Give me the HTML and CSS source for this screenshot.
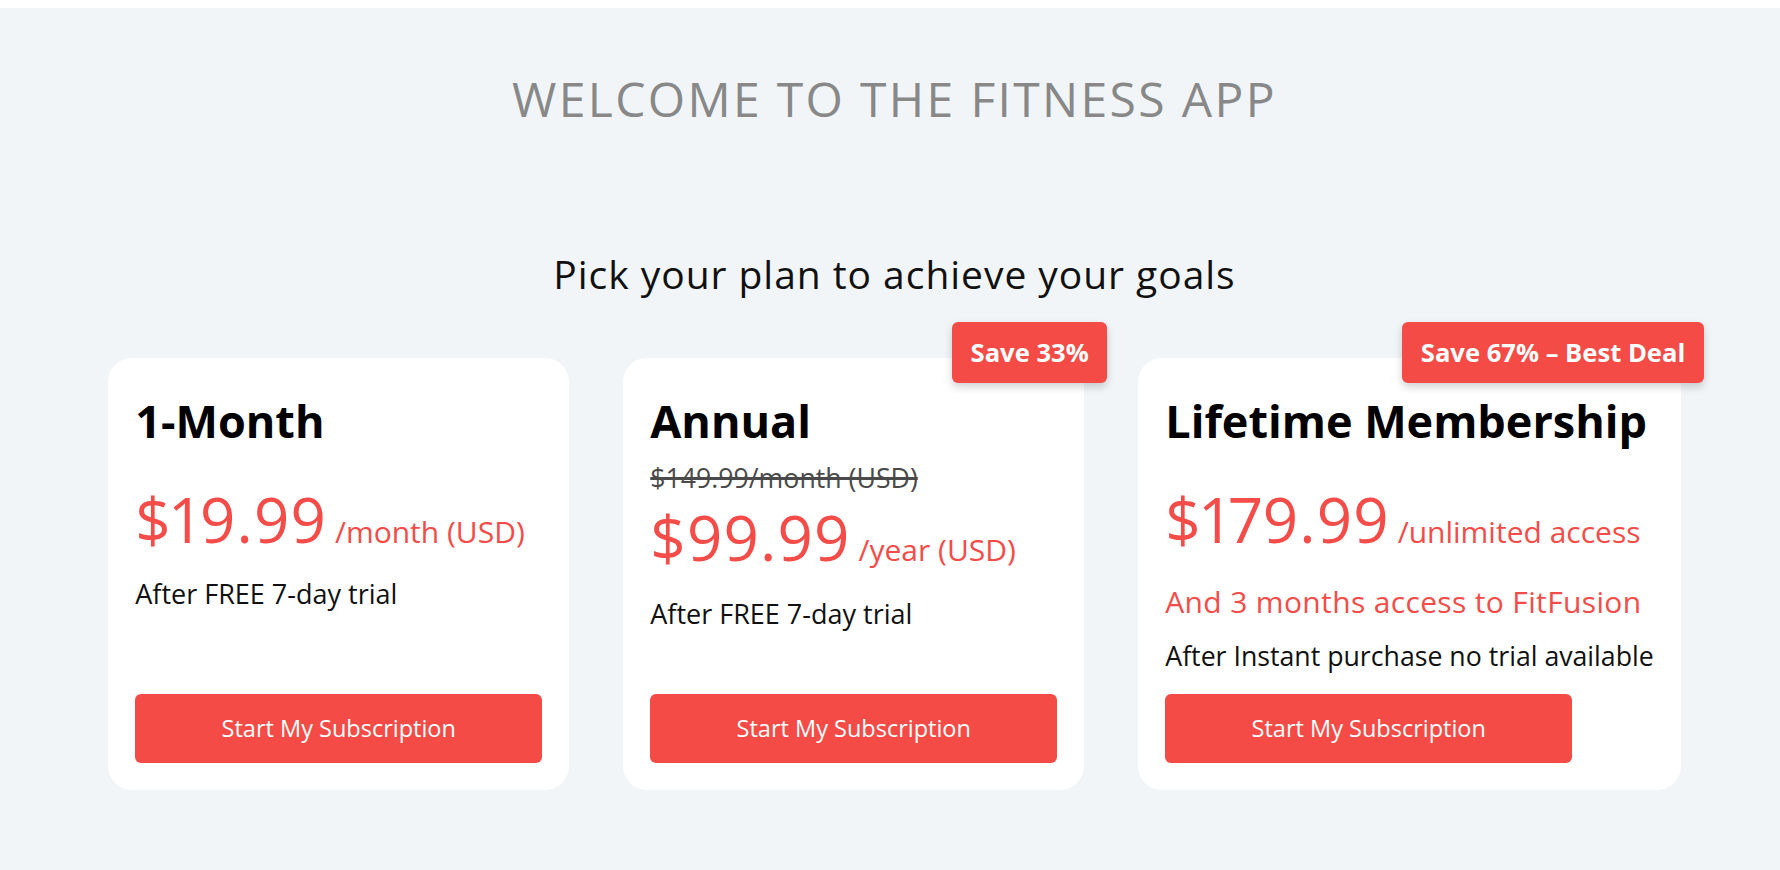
FILE: index.html
```html
<!DOCTYPE html>
<html lang="en">
<head>
<meta charset="utf-8">
<title>Fitness App – Plans</title>
<link rel="stylesheet" href="styles.css">
</head>
<body>
<main class="page">
  <h1 class="welcome">WELCOME TO THE FITNESS APP</h1>
  <h2 class="subtitle">Pick your plan to achieve your goals</h2>

  <section class="plans">
    <article class="card">
      <div class="card-body">
        <h3 class="plan-name">1-Month</h3>
        <p class="price">$19.99<span class="per"> /month (USD)</span></p>
        <p class="note">After FREE 7-day trial</p>
      </div>
      <button class="cta" type="button">Start My Subscription</button>
    </article>

    <article class="card">
      <span class="badge">Save 33%</span>
      <div class="card-body">
        <h3 class="plan-name">Annual</h3>
        <p class="old-price">$149.99/month (USD)</p>
        <p class="price price-after-old">$99.99<span class="per"> /year (USD)</span></p>
        <p class="note note-after-old">After FREE 7-day trial</p>
      </div>
      <button class="cta" type="button">Start My Subscription</button>
    </article>

    <article class="card">
      <span class="badge">Save 67% – Best Deal</span>
      <div class="card-body">
        <h3 class="plan-name">Lifetime Membership</h3>
        <p class="price">$179.99<span class="per"> /unlimited access</span></p>
        <p class="bonus">And 3 months access to FitFusion</p>
        <p class="note note-small">After Instant purchase no trial available</p>
      </div>
      <button class="cta" type="button">Start My Subscription</button>
    </article>
  </section>
</main>
</body>
</html>
```
FILE: styles.css
```css
html {
  background: #ffffff;
}

body {
  margin: 8px 0 0;
  font-family: "Open Sans", "Liberation Sans", sans-serif;
  color: #111111;
}

.page {
  min-height: calc(100vh - 8px);
  box-sizing: border-box;
  background: #f1f5f8;
  padding: 61.4px 0 0 9px;
  display: flex;
  flex-direction: column;
  align-items: center;
}

.welcome {
  margin: 0;
  font-size: 48px;
  line-height: 60px;
  font-weight: 400;
  letter-spacing: 2.35px;
  color: #888888;
  white-space: nowrap;
}

.subtitle {
  margin: 120.5px 0 0;
  font-size: 39px;
  line-height: 48px;
  font-weight: 400;
  letter-spacing: 0.96px;
  color: #111111;
  white-space: nowrap;
}

.plans {
  margin-top: 60.1px;
  display: flex;
  gap: 54px;
  align-items: stretch;
}

.card {
  position: relative;
  flex: 0 0 auto;
  display: flex;
  flex-direction: column;
  background: #ffffff;
  border-radius: 24px;
  padding: 36.5px 27px 27px;
  white-space: nowrap;
}

.card-body {
  flex: 1 1 auto;
}

.card-body p {
  margin: 0;
}

.plan-name {
  margin: 0;
  font-size: 45px;
  line-height: 54px;
  font-weight: 700;
  color: #000000;
}

.price {
  margin-top: 35.64px !important;
  font-size: 62px;
  line-height: 70px;
  letter-spacing: 1.2px;
  font-variant-numeric: proportional-nums;
  color: #f44c49;
}

.price-after-old {
  margin-top: 7.04px !important;
}

.per {
  font-size: 30px;
  line-height: 1;
  letter-spacing: 0;
}

.old-price {
  margin-top: 12.4px !important;
  font-size: 26.7px;
  line-height: 34px;
  color: #4a4a4a;
  text-decoration: line-through;
  text-decoration-thickness: 2.5px;
}

.note {
  margin-top: 22.26px !important;
  font-size: 27px;
  line-height: 36px;
  color: #111111;
}

.note-after-old {
  margin-top: 23.86px !important;
}

.bonus {
  margin-top: 28.46px !important;
  font-size: 30px;
  line-height: 38px;
  letter-spacing: 0.35px;
  color: #f44c49;
}

.note-small {
  margin-top: 18.6px !important;
  font-size: 26.7px;
  line-height: 34px;
}

.cta {
  margin-top: 20.7px;
  width: 407px;
  height: 69px;
  border: 0;
  border-radius: 6px;
  background: #f44b47;
  color: #ffffff;
  font-family: inherit;
  font-size: 23.5px;
  font-weight: 400;
  display: flex;
  align-items: center;
  justify-content: center;
  padding: 0;
  cursor: pointer;
}

.badge {
  position: absolute;
  top: -36px;
  right: -23px;
  height: 61px;
  box-sizing: border-box;
  padding: 0 18.5px;
  display: flex;
  align-items: center;
  background: #f44b47;
  color: #ffffff;
  border-radius: 6px;
  font-size: 25.6px;
  font-weight: 700;
  box-shadow: 0 4px 9px rgba(0, 0, 0, 0.18);
}
```
